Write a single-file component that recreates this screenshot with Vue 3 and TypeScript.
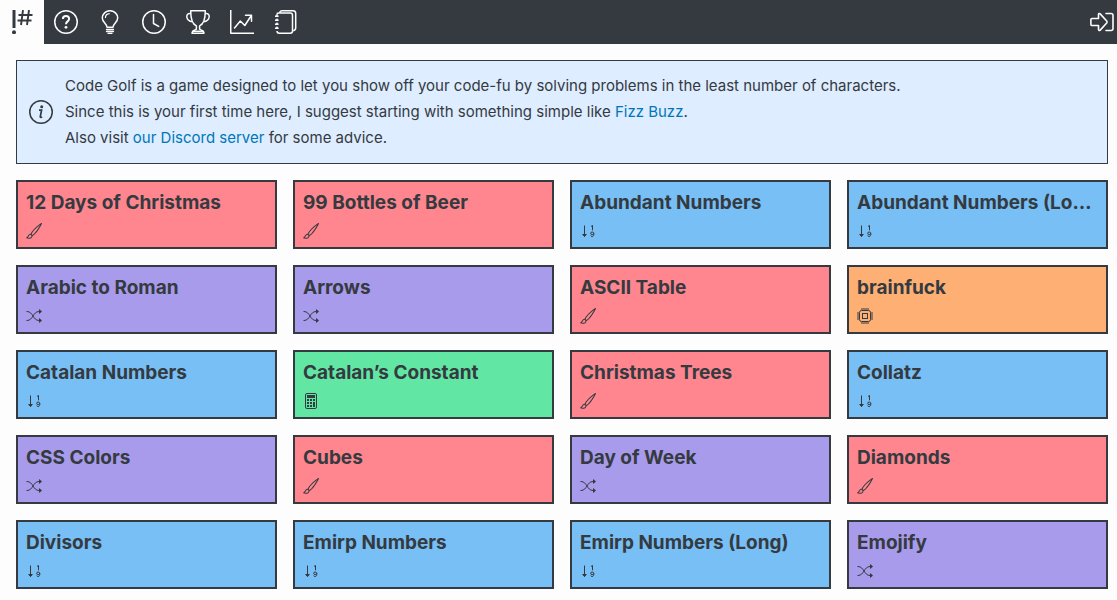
<script setup lang="ts">
type Category = 'art' | 'sequence' | 'transform' | 'computing' | 'mathematics'

interface Hole {
  name: string
  category: Category
}

interface NavLink {
  label: string
  icon: string
}

const links: NavLink[] = [
  { label: 'About', icon: 'help' },
  { label: 'Ideas', icon: 'bulb' },
  { label: 'Recent', icon: 'clock' },
  { label: 'Rankings', icon: 'trophy' },
  { label: 'Stats', icon: 'graph' },
  { label: 'Wiki', icon: 'journal' },
]

const holes: Hole[] = [
  { name: '12 Days of Christmas', category: 'art' },
  { name: '99 Bottles of Beer', category: 'art' },
  { name: 'Abundant Numbers', category: 'sequence' },
  { name: 'Abundant Numbers (Long)', category: 'sequence' },
  { name: 'Arabic to Roman', category: 'transform' },
  { name: 'Arrows', category: 'transform' },
  { name: 'ASCII Table', category: 'art' },
  { name: 'brainfuck', category: 'computing' },
  { name: 'Catalan Numbers', category: 'sequence' },
  { name: 'Catalan’s Constant', category: 'mathematics' },
  { name: 'Christmas Trees', category: 'art' },
  { name: 'Collatz', category: 'sequence' },
  { name: 'CSS Colors', category: 'transform' },
  { name: 'Cubes', category: 'art' },
  { name: 'Day of Week', category: 'transform' },
  { name: 'Diamonds', category: 'art' },
  { name: 'Divisors', category: 'sequence' },
  { name: 'Emirp Numbers', category: 'sequence' },
  { name: 'Emirp Numbers (Long)', category: 'sequence' },
  { name: 'Emojify', category: 'transform' },
]
</script>

<template>
  <div class="page">
    <header class="bar">
      <nav class="nav">
        <a class="tab active" href="#" aria-label="Home">
          <svg class="icon" viewBox="0 0 24 24" fill="none" stroke="currentColor">
            <path d="M4 0v18" stroke-width="3" />
            <circle cx="4" cy="22.3" r="2" fill="currentColor" stroke="none" />
            <path d="M13 0l-2 15M19 0l-2 15M8.500 5H22.500M7.500 10.500H21.500" stroke-width="1.900" />
          </svg>
        </a>
        <a v-for="link in links" :key="link.icon" class="tab" href="#" :aria-label="link.label">
          <svg class="icon" viewBox="0 0 24 24" fill="none" stroke="currentColor" stroke-width="1.500" stroke-linejoin="round">
            <template v-if="link.icon === 'help'">
              <circle cx="12" cy="12" r="11.250" />
              <path d="M8.900 9c0-2 1.400-3 3.100-3s3.100 1 3.100 2.800c0 2.700-3.100 2.500-3.100 5.400" stroke-width="2" />
              <circle cx="12" cy="17.300" r="1.400" fill="currentColor" stroke="none" />
            </template>
            <template v-else-if="link.icon === 'bulb'">
              <path d="M9 17.200c0-3.300-4.700-4.700-4.700-9.200a7.700 7.300 0 0 1 15.400 0c0 4.500-4.700 5.900-4.700 9.200z" />
              <path d="M7.400 8c0-2.600 1.800-4.300 4.300-4.400" stroke-width="1.200" />
              <path d="M8.500 19.500h7M8.500 21.500h7M10 23.300h4" stroke-width="1.300" stroke-linecap="round" />
            </template>
            <template v-else-if="link.icon === 'clock'">
              <circle cx="12" cy="12" r="11.250" />
              <path d="M11.500 4.500v9l5.200 2.900" stroke-linecap="round" />
            </template>
            <template v-else-if="link.icon === 'trophy'">
              <path d="M4.700.750h14.600c0 8-1.200 13.300-5.700 15.100v3.300l3.600 2 .800 2H6l.800-2 3.600-2v-3.300C5.900 14.100 4.700 8.750 4.700.750z" />
              <path d="M4.900 3.700C2 3 .4 4.800.9 7.300c.500 2.500 2.700 4 5.400 4.400M19.100 3.700c2.900-.700 4.500 1.100 4 3.600-.500 2.500-2.700 4-5.400 4.400M6.800 21.200h10.400" />
            </template>
            <template v-else-if="link.icon === 'graph'">
              <path d="M.750 0v23.250H24" />
              <path d="M4.500 18l5.800-7 4.500 4.500L21.300 5.500M15.500 5.300h6v6" stroke-linecap="round" />
            </template>
            <template v-else>
              <path d="M3 4.800V4.500c0-.900.700-1.500 1.500-1.500h11.800c1.300 0 2.200.900 2.200 2.200v15.800c0 1.300-.900 2.200-2.200 2.200H5.200c-1.200 0-2.200-.900-2.200-2.200" />
              <path d="M5.800 2.800C6 1.500 6.700.750 8 .750h11c1.600 0 2.700 1.100 2.700 2.700v14.600c0 1.500-1 2.500-2.500 2.700" />
              <path d="M1 6.300h3.500M1 10.300h3.500M1 14.300h3.500M1 18.300h3.500" />
              <path d="M3 4.500l1.200 1.800H1.800zM3 8.500l1.200 1.800H1.800zM3 12.500l1.200 1.800H1.800zM3 16.500l1.200 1.800H1.800z" stroke-width=".5" fill="currentColor" />
            </template>
          </svg>
        </a>
      </nav>
      <a class="login" href="#" aria-label="Log in">
        <svg class="icon" viewBox="0 0 24 24" fill="none" stroke="currentColor" stroke-width="1.600" stroke-linejoin="round" stroke-linecap="round">
          <path d="M2 8.500h6.500V4.500c0-1 1-1.300 1.700-.600l6.500 7.100c.500.600.500 1.400 0 2l-6.500 7.100c-.700.700-1.700.400-1.700-.6v-4H2c-.7 0-1.100-.400-1.100-1.100V9.600c0-.700.400-1.100 1.100-1.100z" />
          <path d="M16 3.500h5c1.200 0 2 .800 2 2v13c0 1.200-.800 2-2 2h-5" />
        </svg>
      </a>
    </header>

    <main class="content">
      <section class="notice">
        <svg class="icon" viewBox="0 0 24 24" fill="none" stroke="currentColor" aria-hidden="true">
          <circle cx="12" cy="12" r="11.250" stroke-width="1.500" />
          <path d="M10 10.200h2.600l-1.300 6.200c-.200.900.300 1.300 1.900.600" stroke-width="1.700" />
          <circle cx="12.700" cy="6.800" r="1.500" fill="currentColor" stroke="none" />
        </svg>
        <p class="message">
          Code Golf is a game designed to let you show off your code-fu by solving problems in the least number of characters.<br>
          Since this is your first time here, I suggest starting with something simple like <a href="#">Fizz Buzz</a>.<br>
          Also visit <a href="#">our Discord server</a> for some advice.
        </p>
      </section>

      <section class="holes">
        <a v-for="hole in holes" :key="hole.name" class="card" :class="hole.category" href="#">
          <h2 class="title">{{ hole.name }}</h2>
          <svg class="glyph" viewBox="0 0 16 16" fill="currentColor" aria-hidden="true">
            <path
              v-if="hole.category === 'art'"
              d="M15.825.12a.5.5 0 0 1 .132.584c-1.53 3.430-4.743 8.170-7.095 10.640a6.100 6.100 0 0 1-2.373 1.534c-.018.227-.06.538-.16.868-.201.659-.667 1.479-1.708 1.740a8.100 8.100 0 0 1-3.078.132 4 4 0 0 1-.562-.135 1.400 1.400 0 0 1-.466-.247.7.7 0 0 1-.204-.288.62.62 0 0 1 .004-.443c.095-.245.316-.38.461-.452.394-.197.625-.453.867-.826.095-.144.184-.297.287-.472l.117-.198c.151-.255.326-.54.546-.848.528-.739 1.201-.925 1.746-.896q.19.012.348.048c.062-.172.142-.38.238-.608.261-.619.658-1.419 1.187-2.069 2.176-2.670 6.180-6.206 9.117-8.104a.5.5 0 0 1 .596.040M4.705 11.912a1.200 1.200 0 0 0-.419-.1c-.246-.013-.573.05-.879.479-.197.275-.355.532-.5.777l-.105.177c-.106.181-.213.362-.32.528a3.400 3.400 0 0 1-.76.861c.69.112 1.736.111 2.657-.12.559-.139.843-.569.993-1.060a3 3 0 0 0 .126-.75zm1.440.026c.12-.04.277-.1.458-.183a5.100 5.100 0 0 0 1.535-1.100c1.900-1.996 4.412-5.570 6.052-8.631-2.590 1.927-5.566 4.660-7.302 6.792-.442.543-.795 1.243-1.042 1.826-.121.288-.214.54-.275.720v.001l.575.575z"
            />
            <g v-else-if="hole.category === 'sequence'" fill="none" stroke="currentColor">
              <path d="M4.500 2.500v11" />
              <path d="M2.700 11.500h3.600L4.500 13.500z" fill="currentColor" />
              <path d="M11 3.500l1.500-1v4.800" />
              <ellipse cx="12.200" cy="10.300" rx="1.500" ry="1.300" />
              <path d="M13.800 10.200c.100 2-.3 3.300-1.700 3.300-.7 0-1.200-.3-1.400-.9" />
            </g>
            <g v-else-if="hole.category === 'transform'">
              <path d="M.5 3.500H1c3 0 4.700 2.300 6 4.500s3 4.500 6 4.500h.5M.5 12.500H1c3 0 4.700-2.300 6-4.500s3-4.500 6-4.500h.5" fill="none" stroke="currentColor" />
              <path d="M13 5.466V1.534a.25.25 0 0 1 .41-.192l2.360 1.966c.12.1.12.284 0 .384l-2.360 1.966a.25.25 0 0 1-.41-.192m0 9v-3.932a.25.25 0 0 1 .41-.192l2.360 1.966c.12.1.12.284 0 .384l-2.360 1.966a.25.25 0 0 1-.41-.192" />
            </g>
            <g v-else-if="hole.category === 'computing'" fill="none" stroke="currentColor">
              <rect x="2.500" y="2.500" width="11" height="11" rx="2" />
              <rect x="5.500" y="5.500" width="5" height="5" />
              <path d="M5 0v2M7 0v2M9 0v2M11 0v2M5 14v2M7 14v2M9 14v2M11 14v2M0 5h2M0 7h2M0 9h2M0 11h2M14 5h2M14 7h2M14 9h2M14 11h2" />
            </g>
            <g v-else>
              <rect x="2.500" y=".5" width="11" height="15" rx="1.500" fill="none" stroke="currentColor" />
              <path d="M4 2h8v3H4zM4 6h2v2H4zM7 6h2v2H7zM10 6h2v2h-2zM4 9h2v2H4zM7 9h2v2H7zM4 12h2v2H4zM7 12h2v2H7zM10 9h2v5h-2z" />
            </g>
          </svg>
        </a>
      </section>
    </main>
  </div>
</template>

<style>
body {
  margin: 0;
  background: #fdfdfd;
}
</style>

<style scoped>
.page {
  color: #343a40;
  font-family: Inter, "Liberation Sans", sans-serif;
  font-size: 15px;
  line-height: 26px;
}

.bar {
  display: flex;
  align-items: center;
  justify-content: space-between;
  padding-right: 3px;
  background: #343a40;
}

.nav {
  display: flex;
}

.tab {
  display: flex;
  padding: 10px;
  color: #fdfdfd;
}

.tab.active {
  background: #fdfdfd;
  color: #343a40;
}

.login {
  display: flex;
  color: #fdfdfd;
}

.icon {
  flex: none;
  width: 24px;
  height: 24px;
}

.content {
  display: grid;
  gap: 16px;
  padding: 16px 9px 9px 16px;
}

.notice {
  display: flex;
  align-items: center;
  gap: 12px;
  padding: 12px;
  border: 1px solid #343a40;
  background: #deedff;
}

.message {
  margin: 0;
}

.message a {
  color: #0076ba;
  text-decoration: none;
}

.holes {
  display: grid;
  grid-template-columns: repeat(4, minmax(0, 1fr));
  gap: 16px;
}

.card {
  display: flex;
  flex-direction: column;
  gap: 7px;
  padding: 8px;
  border: 2px solid #343a40;
  color: #343a40;
  text-decoration: none;
}

.title {
  margin: 0;
  overflow: hidden;
  font-size: 19px;
  font-weight: 700;
  line-height: 26px;
  text-overflow: ellipsis;
  white-space: nowrap;
}

.glyph {
  width: 16px;
  height: 16px;
}

.art {
  background: #ff868e;
}

.sequence {
  background: #77bff5;
}

.transform {
  background: #a99beb;
}

.computing {
  background: #feb074;
}

.mathematics {
  background: #62e6a3;
}
</style>
